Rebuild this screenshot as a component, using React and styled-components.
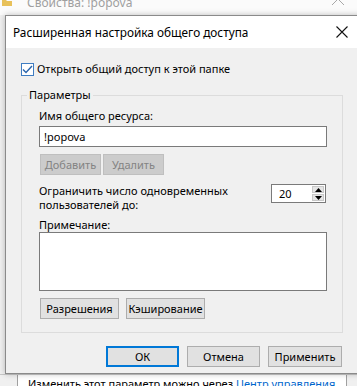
import React from 'react';
import styled, { createGlobalStyle } from 'styled-components';

const GlobalStyle = createGlobalStyle`
  html, body {
    margin: 0;
    padding: 0;
    background: #f0f0f0;
  }
  * {
    box-sizing: border-box;
  }
`;

const FONT = `'Segoe UI', 'Noto Sans', 'Liberation Sans', sans-serif`;

const Screen = styled.div`
  width: 357px;
  height: 386px;
  overflow: hidden;
  display: flex;
  flex-direction: column;
  background: #f0f0f0;
  font-family: ${FONT};
  font-size: 11px;
  color: #000;
`;

const BackTitle = styled.div`
  height: 15px;
  flex: none;
  background: #fbfbfb;
  display: flex;
  align-items: flex-start;
  overflow: hidden;
  color: #a0a0a0;
  font-size: 12px;
`;

const BackTitleText = styled.span`
  margin-top: -6px;
  margin-left: 15px;
  line-height: 18px;
`;

const BackClose = styled.div`
  margin-left: auto;
  margin-right: 12px;
  margin-top: -8px;
`;

const Dialog = styled.div`
  flex: none;
  margin-left: 5px;
  width: 360px;
  border: 1px solid #8a8a8a;
  border-right: none;
  background: #f0f0f0;
  box-shadow: 0 0 6px rgba(0, 0, 0, 0.25);
  display: flex;
  flex-direction: column;
  position: relative;
  z-index: 1;
`;

const TitleBar = styled.div`
  height: 32px;
  background: #fff;
  display: flex;
  align-items: center;
  padding-left: 7px;
  font-size: 11.8px;
`;

const CloseBox = styled.div`
  margin-left: auto;
  width: 46px;
  height: 32px;
  display: flex;
  align-items: center;
  justify-content: center;
`;

const Body = styled.div`
  padding: 14px 0 6px 15px;
  display: flex;
  flex-direction: column;
`;

const CheckRow = styled.label`
  display: flex;
  align-items: center;
  height: 14px;
  gap: 3px;
  line-height: 14px;
`;

const CheckBox = styled.span`
  width: 13px;
  height: 13px;
  border: 1px solid #3f7dc2;
  background: #fff;
  display: flex;
  align-items: center;
  justify-content: center;
  flex: none;
`;

const Group = styled.fieldset`
  margin: 12px 0 0 0;
  width: 322px;
  border: 1px solid #dcdcdc;
  padding: 7px 15px 13px 17px;
  min-width: 0;
  display: flex;
  flex-direction: column;
`;

const Legend = styled.legend`
  padding: 0 2px;
  margin-left: -12px;
  line-height: 14px;
`;

const Label = styled.div`
  line-height: 14px;
  margin-top: ${(p) => p.$top || 0}px;
`;

const TextBox = styled.div`
  margin-top: 3px;
  height: 21px;
  background: #fff;
  border: 1px solid #7a7a7a;
  padding-left: 4px;
  display: flex;
  align-items: center;
`;

const Memo = styled.div`
  height: 59px;
  background: #fff;
  border: 1px solid #7a7a7a;
`;

const ButtonRow = styled.div`
  display: flex;
  gap: ${(p) => p.$gap || 2}px;
  margin-top: ${(p) => p.$top || 0}px;
  padding-left: 1px;
`;

const Button = styled.div`
  width: ${(p) => p.$w}px;
  height: 21px;
  display: flex;
  align-items: center;
  justify-content: center;
  background: ${(p) => (p.$disabled ? '#cccccc' : '#e1e1e1')};
  border: ${(p) => (p.$default ? '2px solid #0078d7' : p.$disabled ? '1px solid #bfbfbf' : '1px solid #adadad')};
  color: ${(p) => (p.$disabled ? '#838383' : '#000')};
  line-height: 14px;
`;

const LimitRow = styled.div`
  margin-top: 9px;
  display: flex;
  justify-content: space-between;
  align-items: flex-start;
`;

const Spinner = styled.div`
  width: 55px;
  height: 19px;
  display: flex;
  background: #fff;
  border: 1px solid #7a7a7a;
  margin-right: 1px;
`;

const SpinValue = styled.div`
  flex: 1;
  padding-left: 7px;
  display: flex;
  align-items: center;
`;

const SpinArrows = styled.div`
  width: 14px;
  display: flex;
  flex-direction: column;
  gap: 1px;
  padding: 1px;
`;

const SpinPart = styled.div`
  flex: 1;
  background: #e5e5e5;
  border: 1px solid #c8c8c8;
  display: flex;
  align-items: center;
  justify-content: center;
`;

const Footer = styled.div`
  display: flex;
  gap: 8px;
  margin-top: 13px;
  padding-left: 85px;
`;

const BackBody = styled.div`
  flex: 1;
  background: #f0f0f0;
  display: flex;
  padding-left: 17px;
  border-top: 1px solid #c8c8c8;
`;

const BackPanel = styled.div`
  flex: 1;
  background: #fff;
  border-left: 1px solid #a0a0a0;
  border-right: 1px solid #a0a0a0;
  margin-right: 10px;
  padding: 1px 0 0 10px;
  line-height: 16px;
  white-space: nowrap;
  overflow: hidden;
`;

const Link = styled.span`
  color: #0066cc;
`;

function Arrow({ up }) {
  return (
    <svg width="7" height="4" viewBox="0 0 7 4">
      <path d={up ? 'M0 4 L3.5 0 L7 4 Z' : 'M0 0 L3.5 4 L7 0 Z'} fill="#000" />
    </svg>
  );
}

export default function App() {
  return (
    <>
      <GlobalStyle />
      <Screen>
        <BackTitle>
          <svg width="10" height="9" viewBox="0 0 10 9" style={{ marginLeft: 2 }}>
            <path d="M0 0 H4 L5 1 H10 V6 H0 Z" fill="#e8c15a" />
          </svg>
          <BackTitleText>Свойства: !popova</BackTitleText>
          <BackClose>
            <svg width="14" height="14" viewBox="0 0 14 14">
              <path d="M1 1 L13 13 M13 1 L1 13" stroke="#a8a8a8" strokeWidth="1" />
            </svg>
          </BackClose>
        </BackTitle>

        <Dialog>
          <TitleBar>
            Расширенная настройка общего доступа
            <CloseBox>
              <svg width="12" height="12" viewBox="0 0 12 12">
                <path d="M0.5 0.5 L11.5 11.5 M11.5 0.5 L0.5 11.5" stroke="#111" strokeWidth="1.1" />
              </svg>
            </CloseBox>
          </TitleBar>

          <Body>
            <CheckRow>
              <CheckBox>
                <svg width="11" height="9" viewBox="0 0 11 9">
                  <path d="M1 4.5 L4 7.5 L10 1" stroke="#2a64ab" strokeWidth="1.4" fill="none" />
                </svg>
              </CheckBox>
              Открыть общий доступ к этой папке
            </CheckRow>

            <Group>
              <Legend>Параметры</Legend>
              <Label>Имя общего ресурса:</Label>
              <TextBox>!popova</TextBox>
              <ButtonRow $top={7} $gap={2}>
                <Button $w={61} $disabled>Добавить</Button>
                <Button $w={61} $disabled>Удалить</Button>
              </ButtonRow>

              <LimitRow>
                <Label>
                  Ограничить число одновременных
                  <br />
                  пользователей до:
                </Label>
                <Spinner>
                  <SpinValue>20</SpinValue>
                  <SpinArrows>
                    <SpinPart><Arrow up /></SpinPart>
                    <SpinPart><Arrow /></SpinPart>
                  </SpinArrows>
                </Spinner>
              </LimitRow>

              <Label $top={6}>Примечание:</Label>
              <Memo />
              <ButtonRow $top={7} $gap={7}>
                <Button $w={79}>Разрешения</Button>
                <Button $w={79}>Кэширование</Button>
              </ButtonRow>
            </Group>

            <Footer>
              <Button $w={73} $default>ОК</Button>
              <Button $w={73}>Отмена</Button>
              <Button $w={74}>Применить</Button>
            </Footer>
          </Body>
        </Dialog>

        <BackBody>
          <BackPanel>
            Изменить этот параметр можно через <Link>Центр управления</Link>
          </BackPanel>
        </BackBody>
      </Screen>
    </>
  );
}
